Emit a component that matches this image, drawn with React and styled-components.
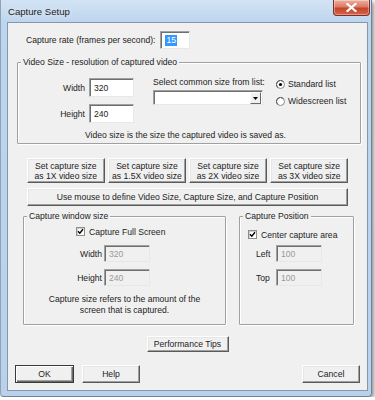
import React from "react";
import styled, { createGlobalStyle } from "styled-components";

const GlobalStyle = createGlobalStyle`
  body {
    margin: 0;
    background: #ffffff;
    font-family: "Liberation Sans", Arial, sans-serif;
    font-size: 8.6px;
    color: #1c1c1c;
  }
`;

export default function App() {
  return (
    <>
      <GlobalStyle />
      <Window>
        <TitleBar>
          <Title>Capture Setup</Title>
          <CloseButton aria-label="Close">
            <svg width="11" height="9" viewBox="0 0 11 9">
              <path
                d="M1.5 1 L9.5 8 M9.5 1 L1.5 8"
                stroke="#fff"
                strokeWidth="2.2"
                strokeLinecap="square"
              />
            </svg>
          </CloseButton>
        </TitleBar>

        <Client>
          <RateRow>
            <span>Capture rate (frames per second):</span>
            <TextBox $w={30} $h={18}>
              <Selected>15</Selected>
            </TextBox>
          </RateRow>

          <Group $ml={9} $mr={6} $mt={13} $pb={2}>
            <Legend>Video Size - resolution of captured video</Legend>
            <VideoTop>
              <FieldGrid $label={30} $gap={4} $row={19} $ml={37} $mt={1} $right>
                <span>Width</span>
                <TextBox $w={45} $h={19}>320</TextBox>
                <span>Height</span>
                <TextBox $w={45} $h={19}>240</TextBox>
              </FieldGrid>
              <SelectCol>
                <span>Select common size from list:</span>
                <SelectBox>
                  <DropArrow>
                    <svg width="5" height="3" viewBox="0 0 5 3">
                      <path d="M0 0 H5 L2.5 3 Z" fill="#000" />
                    </svg>
                  </DropArrow>
                </SelectBox>
              </SelectCol>
              <RadioCol>
                <RadioRow>
                  <Radio checked />
                  <span>Standard list</span>
                </RadioRow>
                <RadioRow>
                  <Radio />
                  <span>Widescreen list</span>
                </RadioRow>
              </RadioCol>
            </VideoTop>
            <Caption $mt={7} $pr={7}>
              Video size is the size the captured video is saved as.
            </Caption>
          </Group>

          <ButtonGrid>
            <Button $h={25}>Set capture size<br />as 1X video size</Button>
            <Button $h={25}>Set capture size<br />as 1.5X video size</Button>
            <Button $h={25}>Set capture size<br />as 2X video size</Button>
            <Button $h={25}>Set capture size<br />as 3X video size</Button>
          </ButtonGrid>
          <WideButton $h={18}>
            Use mouse to define Video Size, Capture Size, and Capture Position
          </WideButton>

          <GroupRow>
            <Group $w={203} $h={109} $pb={8}>
              <Legend>Capture window size</Legend>
              <CheckRow $mt={10} $pl={52}>
                <Check />
                <span>Capture Full Screen</span>
              </CheckRow>
              <FieldGrid $label={28} $gap={2} $row={17} $ml={50} $mt={9} $right>
                <span>Width</span>
                <TextBox $w={46} $h={17} $disabled>320</TextBox>
                <span>Height</span>
                <TextBox $w={46} $h={17} $disabled>240</TextBox>
              </FieldGrid>
              <Caption $mt={8}>
                Capture size refers to the amount of the
                <br />
                screen that is captured.
              </Caption>
            </Group>

            <Group $w={115} $h={109}>
              <Legend>Capture Position</Legend>
              <CheckRow $mt={13} $pl={8}>
                <Check />
                <span>Center capture area</span>
              </CheckRow>
              <FieldGrid $label={20} $gap={0} $row={17} $ml={16} $mt={6}>
                <span>Left</span>
                <TextBox $w={46} $h={17} $disabled>100</TextBox>
                <span>Top</span>
                <TextBox $w={46} $h={17} $disabled>100</TextBox>
              </FieldGrid>
            </Group>
          </GroupRow>

          <TipsButton $h={16}>Performance Tips</TipsButton>

          <BottomRow>
            <Button $w={59} $h={18} $default>OK</Button>
            <Button $w={58} $h={18}>Help</Button>
            <Spacer />
            <Button $w={58} $h={18}>Cancel</Button>
          </BottomRow>
        </Client>
      </Window>
    </>
  );
}

function Radio({ checked }) {
  return (
    <svg width="9" height="9" viewBox="0 0 9 9">
      <circle cx="4.5" cy="4.5" r="4" fill="#fff" stroke="#8a8a8a" />
      <path d="M1.6 7.4 A4 4 0 0 1 7.4 1.6" fill="none" stroke="#555" />
      {checked && <circle cx="4.5" cy="4.5" r="1.6" fill="#000" />}
    </svg>
  );
}

function Check() {
  return (
    <CheckBox>
      <svg width="7" height="7" viewBox="0 0 7 7">
        <path d="M1 3.2 L2.8 5.2 L6 1.2" fill="none" stroke="#000" strokeWidth="1.4" />
      </svg>
    </CheckBox>
  );
}

const Window = styled.div`
  box-sizing: border-box;
  width: 372px;
  height: 397px;
  display: flex;
  flex-direction: column;
  background: linear-gradient(180deg, #d2e3f4 0px, #bed5ee 22px, #b9d1eb 100%);
  border: 1px solid #6f8297;
  border-top: none;
  border-left-color: #8ea2b8;
  border-radius: 0 0 4px 4px;
  box-shadow: 2px 2px 4px rgba(0, 0, 0, 0.45);
`;

const TitleBar = styled.div`
  height: 22px;
  display: flex;
  align-items: center;
  padding-left: 7px;
`;

const Title = styled.span`
  font-size: 9.6px;
  color: #1b1b1b;
  text-shadow: 0 0 6px rgba(255, 255, 255, 0.9);
`;

const CloseButton = styled.div`
  box-sizing: border-box;
  margin-left: auto;
  margin-right: 1px;
  align-self: flex-start;
  width: 37px;
  height: 16px;
  display: flex;
  align-items: center;
  justify-content: center;
  border: 1px solid #7a3124;
  border-top: none;
  border-radius: 0 0 4px 4px;
  background: linear-gradient(180deg, #eeb0a2 0%, #dc7b64 45%, #c8432b 55%, #d4644a 100%);
  box-shadow: inset 0 0 0 1px rgba(255, 255, 255, 0.35);
`;

const Client = styled.div`
  flex: 1;
  margin: 0 3px 5px 6px;
  display: flex;
  flex-direction: column;
  background: #f0f0f0;
  border: 1px solid #8497ad;
`;

const RateRow = styled.div`
  display: flex;
  align-items: center;
  gap: 5px;
  margin-top: 8px;
  padding-left: 18px;
`;

const TextBox = styled.div`
  box-sizing: border-box;
  width: ${(p) => p.$w}px;
  height: ${(p) => p.$h}px;
  display: flex;
  align-items: center;
  padding-left: 4px;
  background: ${(p) => (p.$disabled ? "#f0f0f0" : "#fff")};
  color: ${(p) => (p.$disabled ? "#9a9a9a" : "#1c1c1c")};
  border: 1px solid;
  border-color: #a0a0a0 #e8e8e8 #e8e8e8 #a0a0a0;
  box-shadow: inset 1px 1px #6f6f6f;
`;

const Selected = styled.span`
  background: #3399ff;
  color: #fff;
  padding: 0 1px;
  line-height: 11px;
`;

const Group = styled.div`
  position: relative;
  box-sizing: border-box;
  ${(p) => (p.$w ? `width: ${p.$w}px;` : "")}
  ${(p) => (p.$h ? `height: ${p.$h}px;` : "")}
  margin: ${(p) => p.$mt || 0}px ${(p) => p.$mr || 0}px 0 ${(p) => p.$ml || 0}px;
  padding-bottom: ${(p) => p.$pb || 0}px;
  border: 1px solid #a0a0a0;
  border-radius: 1px;
  box-shadow: inset 1px 1px #fff, 1px 1px #fff;
`;

const Legend = styled.span`
  position: absolute;
  top: -6px;
  left: 3px;
  padding: 0 2px;
  line-height: 11px;
  background: #f0f0f0;
  white-space: nowrap;
`;

const VideoTop = styled.div`
  display: flex;
  align-items: flex-start;
  padding-top: 14px;
`;

const FieldGrid = styled.div`
  display: grid;
  grid-template-columns: ${(p) => p.$label}px auto;
  grid-auto-rows: ${(p) => p.$row}px;
  column-gap: ${(p) => p.$gap}px;
  row-gap: 7px;
  align-items: center;
  justify-items: ${(p) => (p.$right ? "end" : "start")};
  margin-left: ${(p) => p.$ml}px;
  margin-top: ${(p) => p.$mt}px;
  & > div {
    justify-self: start;
  }
`;

const SelectCol = styled.div`
  width: 110px;
  margin-left: 19px;
  display: flex;
  flex-direction: column;
  gap: 2px;
  line-height: 11px;
  white-space: nowrap;
`;

const SelectBox = styled.div`
  box-sizing: border-box;
  height: 15px;
  display: flex;
  justify-content: flex-end;
  background: #fff;
  border: 1px solid;
  border-color: #a0a0a0 #e8e8e8 #e8e8e8 #a0a0a0;
  box-shadow: inset 1px 1px #6f6f6f;
  padding: 1px 1px 0 0;
`;

const DropArrow = styled.div`
  box-sizing: border-box;
  width: 11px;
  height: 12px;
  display: flex;
  align-items: center;
  justify-content: center;
  background: #f0f0f0;
  border: 1px solid;
  border-color: #fff #696969 #696969 #fff;
`;

const RadioCol = styled.div`
  margin-left: 13px;
  margin-top: 2px;
  display: flex;
  flex-direction: column;
  gap: 6px;
  white-space: nowrap;
`;

const RadioRow = styled.div`
  display: flex;
  align-items: center;
  gap: 3px;
  line-height: 11px;
`;

const Caption = styled.div`
  margin-top: ${(p) => p.$mt}px;
  padding-right: ${(p) => p.$pr || 0}px;
  text-align: center;
  line-height: 11px;
`;

const Button = styled.div`
  box-sizing: border-box;
  ${(p) => (p.$w ? `width: ${p.$w}px;` : "")}
  height: ${(p) => p.$h}px;
  display: flex;
  align-items: center;
  justify-content: center;
  text-align: center;
  line-height: 10px;
  white-space: nowrap;
  background: #f0f0f0;
  border: 1px solid;
  border-color: ${(p) => (p.$default ? "#3a3a3a" : "#fff #5a5a5a #5a5a5a #fff")};
  box-shadow: ${(p) =>
    p.$default
      ? "inset 1px 1px #fff, inset -1px -1px #6a6a6a, inset -2px -2px #a0a0a0"
      : "inset -1px -1px #a0a0a0, inset 1px 1px #e6e6e6"};
`;

const ButtonGrid = styled.div`
  display: grid;
  grid-template-columns: repeat(4, 1fr);
  gap: 3.5px;
  width: 321px;
  margin: 14px 0 0 19px;
`;

const WideButton = styled(Button)`
  width: 321px;
  margin: 5px 0 0 19px;
`;

const GroupRow = styled.div`
  display: flex;
  gap: 13px;
  margin: 10px 0 0 15px;
`;

const CheckRow = styled.div`
  display: flex;
  align-items: center;
  gap: 4px;
  height: 9px;
  margin-top: ${(p) => p.$mt}px;
  padding-left: ${(p) => p.$pl}px;
  white-space: nowrap;
`;

const CheckBox = styled.div`
  box-sizing: border-box;
  width: 9px;
  height: 9px;
  display: flex;
  align-items: center;
  justify-content: center;
  background: #fff;
  border: 1px solid #8e8e8e;
  box-shadow: inset 1px 1px #d0d0d0;
`;

const TipsButton = styled(Button)`
  width: 82px;
  align-self: center;
  margin-top: 11px;
`;

const BottomRow = styled.div`
  display: flex;
  gap: 8px;
  margin-top: 13px;
  padding: 0 7px;
`;

const Spacer = styled.div`
  flex: 1;
`;
